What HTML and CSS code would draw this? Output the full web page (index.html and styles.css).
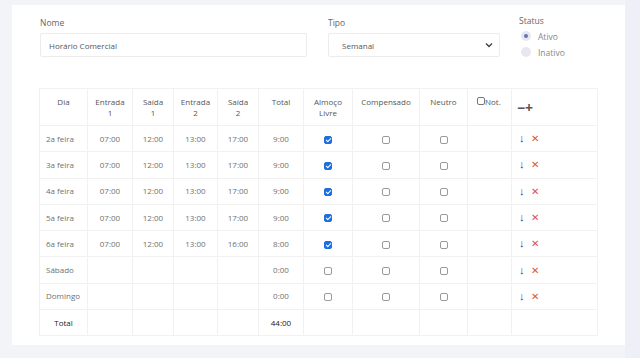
FILE: index.html
```html
<!DOCTYPE html>
<html lang="pt">

<head>
    <meta charset="UTF-8">
    <meta name="viewport" content="width=device-width, initial-scale=1.0">
    <title>Jornada de Trabalho</title>
    <link rel="stylesheet" href="styles.css">
</head>

<body>

    <div class="page">
        <div class="card">

            <!-- Dados da jornada -->
            <div class="form-row">
                <div class="form-group nome">
                    <label for="nome">Nome</label>
                    <input type="text" id="nome" value="Horário Comercial">
                </div>
                <div class="form-group tipo">
                    <label for="tipo">Tipo</label>
                    <div class="select">
                        <span>Semanal</span>
                        <svg width="8" height="6" viewBox="0 0 8 6"><path d="M1 1.5 L4 4.5 L7 1.5" fill="none" stroke="#444" stroke-width="1.4"/></svg>
                    </div>
                </div>
                <div class="form-group status">
                    <label>Status</label>
                    <div class="radio"><span class="dot checked"></span>Ativo</div>
                    <div class="radio"><span class="dot"></span>Inativo</div>
                </div>
            </div>

            <!-- Horarios -->
            <table class="schedule">
                <colgroup>
                    <col style="width:48px">
                    <col style="width:45px">
                    <col style="width:41px">
                    <col style="width:44px">
                    <col style="width:41px">
                    <col style="width:45px">
                    <col style="width:49px">
                    <col style="width:67px">
                    <col style="width:48px">
                    <col style="width:44px">
                    <col style="width:86px">
                </colgroup>
                <thead>
                    <tr>
                        <th>Dia</th>
                        <th>Entrada<br>1</th>
                        <th>Saída<br>1</th>
                        <th>Entrada<br>2</th>
                        <th>Saída<br>2</th>
                        <th>Total</th>
                        <th>Almoço<br>Livre</th>
                        <th>Compensado</th>
                        <th>Neutro</th>
                        <th class="not"><span class="box"></span>Not.</th>
                        <th class="actions-head"><span class="minus">−</span><span class="plus">+</span></th>
                    </tr>
                </thead>
                <tbody id="rows"></tbody>
                <tfoot>
                    <tr>
                        <td class="total-label">Total</td>
                        <td></td>
                        <td></td>
                        <td></td>
                        <td></td>
                        <td class="total-value">44:00</td>
                        <td></td>
                        <td></td>
                        <td></td>
                        <td></td>
                        <td></td>
                    </tr>
                </tfoot>
            </table>

        </div>
        <div class="side"></div>
    </div>

    <script>
        const dias = [
            ['2a feira', '07:00', '12:00', '13:00', '17:00', '9:00', true],
            ['3a feira', '07:00', '12:00', '13:00', '17:00', '9:00', true],
            ['4a feira', '07:00', '12:00', '13:00', '17:00', '9:00', true],
            ['5a feira', '07:00', '12:00', '13:00', '17:00', '9:00', true],
            ['6a feira', '07:00', '12:00', '13:00', '16:00', '8:00', true],
            ['Sábado', '', '', '', '', '0:00', false],
            ['Domingo', '', '', '', '', '0:00', false]
        ];

        const rows = document.getElementById('rows');
        dias.forEach(d => {
            const tr = document.createElement('tr');
            tr.innerHTML = `
                <td class="dia">${d[0]}</td>
                <td>${d[1]}</td>
                <td>${d[2]}</td>
                <td>${d[3]}</td>
                <td>${d[4]}</td>
                <td>${d[5]}</td>
                <td><span class="box ${d[6] ? 'checked' : ''}"></span></td>
                <td><span class="box"></span></td>
                <td><span class="box"></span></td>
                <td></td>
                <td class="actions"><span class="down">&#8595;</span><span class="del">&#10005;</span></td>
            `;
            rows.appendChild(tr);
        });
    </script>

</body>

</html>
```

FILE: styles.css
```css
/* Reset */
* {
    margin: 0;
    padding: 0;
    box-sizing: border-box;
}

body {
    font-family: "Open Sans", Arial, sans-serif;
    background-color: #f3f4f7;
    color: #666;
    font-size: 8px;
}

.page {
    display: flex;
    height: 358px;
    padding: 5px 0 13px 12px;
}

.card {
    width: 613px;
    background-color: #fff;
    padding: 12px 0 0 28px;
}

.side {
    flex: 1;
    background-color: #eef0f8;
    margin-top: -5px;
    margin-bottom: -13px;
}

/* Form */
.form-row {
    display: flex;
    align-items: flex-start;
    height: 40px;
}

.form-group label {
    display: block;
    font-size: 8.5px;
    color: #666;
    margin-bottom: 5px;
}

.nome {
    width: 267px;
    margin-right: 21px;
}

.tipo {
    width: 172px;
    margin-right: 19px;
}

.form-group input,
.select {
    width: 100%;
    height: 24px;
    border: 1px solid #ececec;
    border-radius: 2px;
    font-family: inherit;
    font-size: 8px;
    color: #555;
    padding: 0 8px;
    background: #fff;
}

.select {
    display: flex;
    align-items: center;
    justify-content: space-between;
    padding: 0 6px 0 13px;
}

.status {
    margin-top: -2px;
}

.status label {
    margin-bottom: 2px;
}

.radio {
    display: flex;
    align-items: center;
    gap: 7px;
    color: #888;
    font-size: 8.5px;
    height: 16px;
    margin-left: 2px;
}

.dot {
    width: 10px;
    height: 10px;
    border-radius: 50%;
    background-color: #e6e7ef;
    display: flex;
    align-items: center;
    justify-content: center;
}

.dot.checked::after {
    content: "";
    width: 4px;
    height: 4px;
    border-radius: 50%;
    background-color: #6d70b8;
}

/* Table */
.schedule {
    margin-top: 31px;
    margin-left: -1px;
    border-collapse: collapse;
    table-layout: fixed;
    width: 558px;
}

.schedule th,
.schedule td {
    border: 1px solid #f1f1f1;
    text-align: center;
    font-weight: normal;
}

.schedule th {
    height: 37px;
    vertical-align: top;
    padding-top: 7px;
    color: #555;
    line-height: 11px;
}

.schedule td {
    height: 26.3px;
    vertical-align: middle;
    color: #707070;
    line-height: 10px;
}

.schedule td.dia {
    text-align: left;
    padding-left: 6px;
}

.box {
    display: inline-block;
    width: 8px;
    height: 8px;
    border: 1px solid #9a9a9a;
    border-radius: 2px;
    vertical-align: middle;
    background: #fff;
}

.box.checked {
    background-color: #1b6fe0;
    border-color: #1b6fe0;
    position: relative;
}

.box.checked::after {
    content: "";
    position: absolute;
    left: 2px;
    top: 0;
    width: 2px;
    height: 4px;
    border: solid #fff;
    border-width: 0 1.3px 1.3px 0;
    transform: rotate(45deg);
}

.not {
    text-align: left !important;
    padding-left: 9px;
}

.not .box {
    vertical-align: top;
    margin-top: 1px;
    border-color: #777;
}

.actions-head {
    text-align: left !important;
    padding-left: 5px;
    padding-top: 13px !important;
    color: #4b4fc9;
    font-size: 14px;
    font-weight: bold !important;
}

.actions {
    text-align: left !important;
    padding-left: 7px;
}

.down {
    color: #3a3d8f;
    font-size: 11px;
    margin-right: 6px;
}

.del {
    color: #d9534f;
    font-size: 10px;
}

.total-label {
    font-weight: bold;
    color: #222 !important;
}

.total-value {
    font-weight: bold;
    color: #222 !important;
}
```
